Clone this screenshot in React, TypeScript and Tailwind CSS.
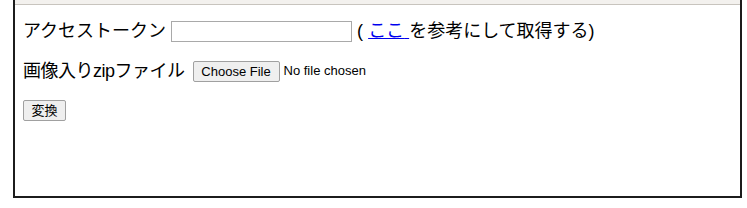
export default function App() {
  return (
    <div className="h-[208px] w-[747px] bg-white">
      <div className="ml-[13px] h-[198px] w-[729px] border-x-2 border-b-2 border-[#1c1c1c] bg-white">
        {/* header remnant */}
        <div className="h-[5px] border-b border-[#c8c4be] bg-[#f3f1ee]" />

        <div
          className="px-[8px] text-[18px] text-black"
          style={{ fontFamily: '"Liberation Sans", "Noto Sans CJK JP", sans-serif' }}
        >
          <div className="mt-[14px] flex h-[24px] items-center whitespace-nowrap">
            <span>アクセストークン</span>
            <input
              type="text"
              className="ml-[5px] h-[21px] w-[181px] border border-[#a9a9a9] bg-white px-1 text-[13px] outline-none"
            />
            <span className="ml-[5px]">
              ({" "}
              <a href="#" className="text-[#0000ee] underline">
                ここ{" "}
              </a>
              を参考にして取得する)
            </span>
          </div>

          <div className="mt-[16px] flex h-[24px] items-center whitespace-nowrap">
            <span className="tracking-[-0.5px]">画像入りzipファイル</span>
            <button className="ml-[8px] h-[21px] w-[87px] rounded-[2px] border border-[#a0a0a0] bg-[#efefef] text-[13px] leading-none text-black">
              Choose File
            </button>
            <span className="ml-[4px] text-[13px]">No file chosen</span>
          </div>

          <div className="mt-[15px] flex h-[24px] items-center">
            <button className="h-[21px] w-[43px] rounded-[2px] border border-[#a0a0a0] bg-[#efefef] text-[13px] leading-none text-black">
              変換
            </button>
          </div>
        </div>
      </div>
    </div>
  );
}
